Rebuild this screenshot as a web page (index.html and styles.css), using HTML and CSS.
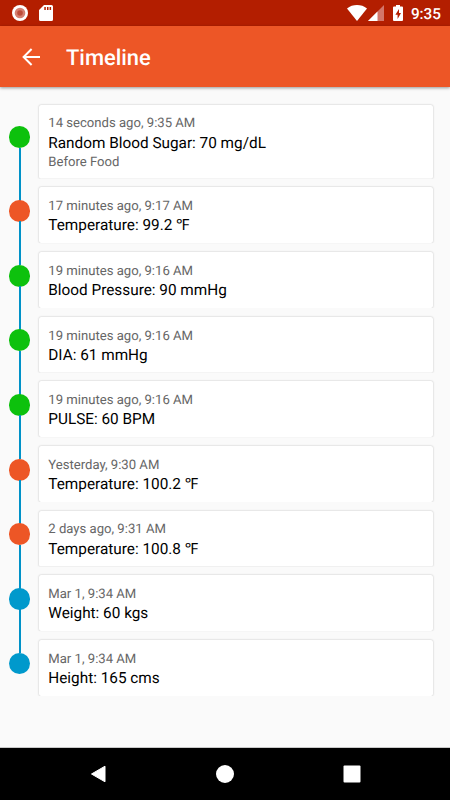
FILE: index.html
```html
<!DOCTYPE html>
<html lang="en">
<head>
    <meta charset="utf-8">
    <meta name="viewport" content="width=device-width, initial-scale=1.0">
    <title>Timeline</title>
    <link rel="stylesheet" href="styles.css">
</head>
<body>
    <div class="status-bar">
        <svg class="icon-record" viewBox="0 0 16 16">
            <circle cx="8" cy="8" r="8" fill="#fff"/>
            <circle cx="8" cy="8" r="5.3" fill="#d58072"/>
            <circle cx="8" cy="8" r="2.8" fill="#bd4c3a"/>
        </svg>
        <svg class="icon-sd" viewBox="0 0 14 16">
            <path d="M5 0h7.5A1.5 1.5 0 0 1 14 1.5v13a1.5 1.5 0 0 1-1.5 1.5h-11A1.5 1.5 0 0 1 0 14.5V5z" fill="#fff"/>
            <path d="M5.3 2h1.5v3H5.3zM8 2h1.5v3H8zM10.6 2h1.5v3h-1.5z" fill="#b31e00"/>
        </svg>
        <svg class="icon-wifi" viewBox="0 0 20 16">
            <path d="M10 16L0 3.4C2.9 1.2 6.3 0 10 0s7.1 1.2 10 3.4z" fill="#fff"/>
        </svg>
        <svg class="icon-signal" viewBox="0 0 16 16">
            <path d="M0 16L16 0v16z" fill="#d3766a"/>
            <path d="M0 16l9.5-9.5V16z" fill="#fff"/>
        </svg>
        <svg class="icon-battery" viewBox="0 0 10 16">
            <path d="M3 0h4v1.6h2a1 1 0 0 1 1 1V15a1 1 0 0 1-1 1H1a1 1 0 0 1-1-1V2.6a1 1 0 0 1 1-1h2z" fill="#fff"/>
            <path d="M6 4L2.4 9.8h2.2V14L8 8.1H6z" fill="#b31e00"/>
        </svg>
        <span class="clock">9:35</span>
    </div>

    <header class="header">
        <svg class="back" viewBox="0 0 18 18">
            <path d="M18 9H1.6M9.6 1L1.6 9l8 8" fill="none" stroke="#fff" stroke-width="2"/>
        </svg>
        <h1 class="title">Timeline</h1>
    </header>

    <main class="timeline">
        <div class="item">
            <div class="marker"><span class="dot green"></span></div>
            <div class="card">
                <p class="time">14 seconds ago, 9:35 AM</p>
                <p class="reading">Random Blood Sugar: 70 mg/dL</p>
                <p class="note">Before Food</p>
            </div>
        </div>
        <div class="item">
            <div class="marker"><span class="dot orange"></span></div>
            <div class="card">
                <p class="time">17 minutes ago, 9:17 AM</p>
                <p class="reading">Temperature: 99.2 ℉</p>
            </div>
        </div>
        <div class="item">
            <div class="marker"><span class="dot green"></span></div>
            <div class="card">
                <p class="time">19 minutes ago, 9:16 AM</p>
                <p class="reading">Blood Pressure: 90 mmHg</p>
            </div>
        </div>
        <div class="item">
            <div class="marker"><span class="dot green"></span></div>
            <div class="card">
                <p class="time">19 minutes ago, 9:16 AM</p>
                <p class="reading">DIA: 61 mmHg</p>
            </div>
        </div>
        <div class="item">
            <div class="marker"><span class="dot green"></span></div>
            <div class="card">
                <p class="time">19 minutes ago, 9:16 AM</p>
                <p class="reading">PULSE: 60 BPM</p>
            </div>
        </div>
        <div class="item">
            <div class="marker"><span class="dot orange"></span></div>
            <div class="card">
                <p class="time">Yesterday, 9:30 AM</p>
                <p class="reading">Temperature: 100.2 ℉</p>
            </div>
        </div>
        <div class="item">
            <div class="marker"><span class="dot orange"></span></div>
            <div class="card">
                <p class="time">2 days ago, 9:31 AM</p>
                <p class="reading">Temperature: 100.8 ℉</p>
            </div>
        </div>
        <div class="item">
            <div class="marker"><span class="dot blue"></span></div>
            <div class="card">
                <p class="time">Mar 1, 9:34 AM</p>
                <p class="reading">Weight: 60 kgs</p>
            </div>
        </div>
        <div class="item">
            <div class="marker"><span class="dot blue"></span></div>
            <div class="card">
                <p class="time">Mar 1, 9:34 AM</p>
                <p class="reading">Height: 165 cms</p>
            </div>
        </div>
    </main>

    <nav class="nav-bar">
        <svg viewBox="0 0 18 18"><path d="M15 1.2v15.6L1.5 9z" fill="#fff" stroke="#fff" stroke-linejoin="round"/></svg>
        <svg viewBox="0 0 18 18"><circle cx="9" cy="9" r="9" fill="#fff"/></svg>
        <svg viewBox="0 0 18 18"><rect x=".5" y=".5" width="17" height="17" rx="1" fill="#fff"/></svg>
    </nav>
</body>
</html>
```

FILE: styles.css
```css
* {
    box-sizing: border-box;
}
body {
    margin: 0;
    height: 800px;
    display: flex;
    flex-direction: column;
    overflow: hidden;
    font-family: Roboto, sans-serif;
    text-rendering: geometricPrecision;
    background: #fafafa;
}
p, h1 {
    margin: 0;
}
svg {
    display: block;
    flex: none;
}

.status-bar {
    height: 26px;
    flex: none;
    display: flex;
    align-items: center;
    padding: 0 9px 0 12px;
    background: #b31e00;
}
.icon-record {
    width: 16px;
    height: 16px;
}
.icon-sd {
    width: 14px;
    height: 16px;
    margin-left: 11px;
}
.icon-wifi {
    width: 20px;
    height: 16px;
    margin-left: auto;
}
.icon-signal {
    width: 16px;
    height: 16px;
    margin-left: 1px;
}
.icon-battery {
    width: 10px;
    height: 16px;
    margin-left: 9px;
}
.clock {
    margin-left: 8px;
    padding-top: 2px;
    color: #fff;
    font-size: 15.3px;
    font-weight: 500;
}

.header {
    height: 61px;
    flex: none;
    display: flex;
    align-items: center;
    padding-left: 22px;
    background: #ed5626;
    box-shadow: 0 1px 3px rgba(0,0,0,0.4);
}
.back {
    width: 18px;
    height: 18px;
}
.title {
    margin-left: 26px;
    padding-top: 4px;
    color: #fff;
    font-size: 21.9px;
    font-weight: 500;
}

.timeline {
    flex: 1;
    padding: 8.8px 17px 0 8.5px;
    border-bottom: 1px solid #c8c8c8;
}
.item {
    display: flex;
    gap: 8.5px;
}

/* circle with the connecting line running above and below it */
.marker {
    width: 22px;
    display: flex;
    flex-direction: column;
    align-items: center;
}
.marker::before,
.marker::after {
    content: "";
    flex: 1;
    width: 2px;
    background: #0092c8;
}
.item:first-child .marker::before,
.item:last-child .marker::after {
    background: none;
}
.dot {
    width: 21.8px;
    height: 21.8px;
    margin: -0.5px 0;
    border-radius: 50%;
}
.green {
    background: #0dc10d;
}
.orange {
    background: #ed5626;
}
.blue {
    background: #0099cc;
}

.card {
    flex: 1;
    margin-top: 8.75px;
    padding: 10.8px 9.3px 7.5px;
    background: #fff;
    border-radius: 2px;
    box-shadow: 0 0 2px rgba(0,0,0,0.28);
    clip-path: inset(-2px -2px 0 -2px);
}
.time,
.note {
    color: #666;
    font-size: 13.125px;
    line-height: 18.2px;
}
.reading {
    color: #000;
    font-size: 15.33px;
    line-height: 19.4px;
}
.note {
    padding-top: 0.8px;
    margin-bottom: -0.8px;
}

.nav-bar {
    height: 52px;
    flex: none;
    display: flex;
    justify-content: space-between;
    align-items: center;
    padding: 0 89.5px 0 90px;
    background: #000;
}
.nav-bar svg {
    width: 18px;
    height: 18px;
}
```
